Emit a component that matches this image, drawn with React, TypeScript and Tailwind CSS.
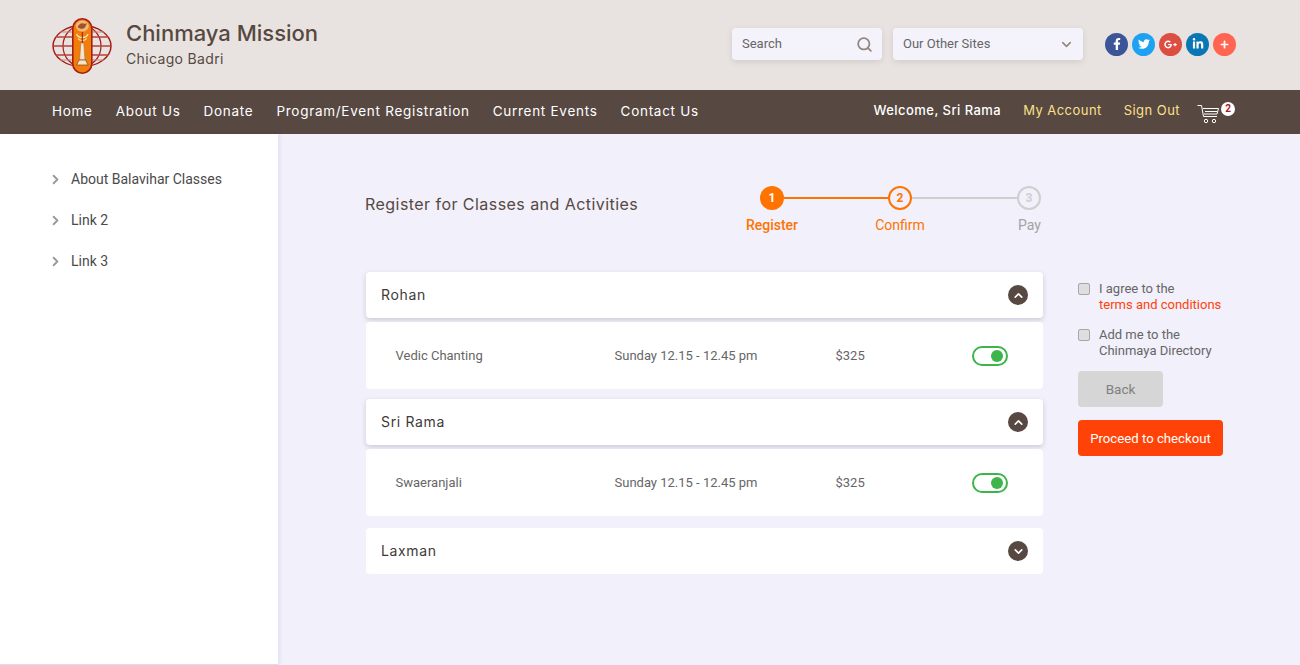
import React from 'react';
import { ChevronDown, ChevronRight, ChevronUp, Search } from 'lucide-react';
import { FaFacebookF, FaGooglePlusG, FaLinkedinIn, FaPlus, FaTwitter } from 'react-icons/fa';

const navLinks = ['Home', 'About Us', 'Donate', 'Program/Event Registration', 'Current Events', 'Contact Us'];

const Logo = () => (
  <svg width="60" height="56" viewBox="0 0 60 56" fill="none" className="mt-[2px] shrink-0">
    <ellipse cx="30" cy="28" rx="29" ry="20.5" stroke="#a81c14" strokeWidth="1.5" />
    <ellipse cx="30" cy="28" rx="19" ry="20.5" stroke="#a81c14" strokeWidth="1.2" />
    <path d="M4 19H56M1.5 28H58.5M4 37H56" stroke="#b8403a" strokeWidth="1.5" />
    <path d="M8 14H52M8 42H52" stroke="#c9807a" strokeWidth="1" />
    <rect x="20.8" y="0.8" width="19" height="54.4" rx="9.5" fill="#f07f09" stroke="#a81c14" strokeWidth="1.6" />
    {/* bird */}
    <ellipse cx="30.3" cy="8" rx="6.5" ry="5.5" fill="#f2b878" />
    <path d="M25.500 9c1.500-3 4-4.500 6-3.500 1.500 0.500 3 0 3.500-0.500-0.500 2-1.500 3-2 4.500-2 2-5.500 1.500-7.500-0.500z" fill="#a0522d" />
    {/* lamp tiers */}
    <path d="M24.500 16c1 2.500 3 3.500 5.800 3.500s4.800-1 5.800-3.500" stroke="#fbe3c0" strokeWidth="1.300" />
    <path d="M26 20.500c1 1.500 2.500 2 4.300 2s3.300-0.500 4.300-2" stroke="#fbe3c0" strokeWidth="1.200" />
    <path d="M30.300 14v11" stroke="#a81c14" strokeWidth="1.100" />
    <path d="M28.800 25h3l1.200 17h-5.400z" fill="#f6e3cc" stroke="#b06a40" strokeWidth="0.600" />
    <path d="M24.500 47h11.600l-2.500-5h-6.600z" fill="#f6e3cc" stroke="#8a3a20" strokeWidth="0.700" />
  </svg>
);

const CartIcon = () => (
  <svg width="23" height="23" viewBox="0 0 23 23" fill="none" stroke="#fff" strokeWidth="1">
    <path d="M0.500 3.500H4.500L6.500 14.500H20" />
    <path d="M6 6.500H21.500L20 12H7M8 9.500H20" />
    <circle cx="9" cy="19" r="1.700" />
    <circle cx="17" cy="19" r="1.700" />
  </svg>
);

const Step = ({ n, label, state }: { n: number; label: string; state: 'done' | 'current' | 'todo' }) => (
  <div className="relative flex h-6 w-6 shrink-0 items-center justify-center">
    <div
      className={
        state === 'done'
          ? 'flex h-6 w-6 items-center justify-center rounded-full bg-[#ff7300] text-xs font-bold text-white'
          : state === 'current'
            ? 'flex h-6 w-6 items-center justify-center rounded-full border-2 border-[#ff7300] text-xs font-bold text-[#ff7300]'
            : 'flex h-6 w-6 items-center justify-center rounded-full border-2 border-[#cfcfcf] text-xs font-bold text-[#cfcfcf]'
      }
    >
      {n}
    </div>
    <span
      className={
        state === 'todo'
          ? 'absolute top-[29px] right-0 text-sm text-[#a3a3a3]'
          : state === 'done'
            ? 'absolute top-[29px] left-1/2 -translate-x-1/2 text-sm font-medium text-[#ff7300]'
            : 'absolute top-[29px] left-1/2 -translate-x-1/2 text-sm text-[#ff7300]'
      }
    >
      {label}
    </span>
  </div>
);

const Toggle = () => (
  <div className="flex h-5 w-9 items-center justify-end rounded-full border-2 border-[#3db54a] pr-[3px]">
    <div className="h-3 w-3 rounded-full bg-[#3db54a]" />
  </div>
);

const PersonHeader = ({ name, open }: { name: string; open: boolean }) => (
  <div
    className={`flex h-[46px] items-center justify-between rounded-sm bg-white px-[15px] ${
      open ? 'shadow-[0_2px_5px_rgba(60,50,90,0.2)]' : ''
    }`}
  >
    <span className="mb-[1px] font-['Inter',sans-serif] text-[14px] tracking-[0.65px] text-[#3f3a38]">{name}</span>
    <div className="flex h-5 w-5 items-center justify-center rounded-full bg-[#574841] text-white">
      {open ? <ChevronUp size={13} strokeWidth={3} /> : <ChevronDown size={13} strokeWidth={3} />}
    </div>
  </div>
);

const ClassRow = ({ title }: { title: string }) => (
  <div className="mt-1 flex h-[67px] items-center rounded-sm bg-white text-[13px] text-[#666]">
    <span className="ml-[29.5px] w-[219px]">{title}</span>
    <span className="w-[221px]">Sunday 12.15 - 12.45 pm</span>
    <span className="w-[136.5px]">$325</span>
    <Toggle />
  </div>
);

const Social = ({ bg, children }: { bg: string; children: React.ReactNode }) => (
  <div className={`flex h-[23px] w-[23px] items-center justify-center rounded-full text-white ${bg}`}>{children}</div>
);

export default function App() {
  return (
    <div className="flex h-[665px] w-full flex-col overflow-hidden bg-[#f1f0fb] font-['Roboto',sans-serif]">
      {/* Header */}
      <header className="flex h-[90px] shrink-0 items-center bg-[#e8e3e0] pr-[64px] pl-[52px]">
        <Logo />
        <div className="mb-[4px] ml-[14px] font-['Inter',sans-serif] text-[#574841]">
          <div className="text-[22px] leading-[28px] font-medium">Chinmaya Mission</div>
          <div className="mt-[3px] text-[14px] leading-[18px] tracking-[0.35px]">Chicago Badri</div>
        </div>
        <div className="mb-[2px] ml-auto flex items-center">
          <div className="flex h-8 w-[150px] items-center justify-between rounded-sm bg-[#f4f3fb] pr-[9px] pl-[10px] text-[13px] text-[#666] shadow-[0_2px_6px_rgba(0,0,0,0.1)]">
            <span>Search</span>
            <Search size={17} strokeWidth={2.5} className="text-[#94867f]" />
          </div>
          <div className="ml-[11px] flex h-8 w-[190px] items-center justify-between rounded-sm bg-[#f4f3fb] pr-[9px] pl-[10px] text-[13px] text-[#666] shadow-[0_2px_6px_rgba(0,0,0,0.1)]">
            <span>Our Other Sites</span>
            <ChevronDown size={15} strokeWidth={2.5} className="text-[#94867f]" />
          </div>
          <div className="ml-[22px] flex items-center gap-[4px]">
            <Social bg="bg-[#3b5598]"><FaFacebookF size={12} /></Social>
            <Social bg="bg-[#1da1f2]"><FaTwitter size={12} /></Social>
            <Social bg="bg-[#dc4e41]"><FaGooglePlusG size={13} /></Social>
            <Social bg="bg-[#0a77b5]"><FaLinkedinIn size={12} /></Social>
            <Social bg="bg-[#ff6550]"><FaPlus size={9} /></Social>
          </div>
        </div>
      </header>

      {/* Nav */}
      <nav className="flex h-[44px] shrink-0 items-center justify-between bg-[#574841] pr-[65px] pl-[52px] font-['Inter',sans-serif] text-white">
        <div className="mb-[1px] flex items-center gap-[23px] text-[13.5px] tracking-[0.72px]">
          {navLinks.map((link) => (
            <span key={link}>{link}</span>
          ))}
        </div>
        <div className="flex items-center text-[13px] tracking-[0.45px]">
          <span className="mb-[2px] font-medium">Welcome, Sri Rama</span>
          <span className="mb-[2px] ml-[22px] text-[#fbe08a]">My Account</span>
          <span className="mb-[2px] ml-[22px] text-[#fbe08a]">Sign Out</span>
          <div className="relative top-[1px] ml-[17px] h-[23px] w-[38px]">
            <CartIcon />
            <span className="absolute top-0 right-0 flex h-[14px] w-[14px] items-center justify-center rounded-full bg-white font-['Roboto',sans-serif] text-[10px] font-bold tracking-normal text-[#a0222a]">
              2
            </span>
          </div>
        </div>
      </nav>

      <div className="flex min-h-0 flex-1">
        {/* Sidebar */}
        <aside className="w-[278px] shrink-0 border-b border-[#dddde4] bg-white pt-[35px] pl-[48px] text-sm text-[#4a4a4a] shadow-[2px_0_4px_rgba(60,50,90,0.08)]">
          {['About Balavihar Classes', 'Link 2', 'Link 3'].map((item) => (
            <div key={item} className="mb-[21px] flex h-5 items-center">
              <ChevronRight size={15} strokeWidth={3} className="text-[#9a9a9a]" />
              <span className="ml-[8px]">{item}</span>
            </div>
          ))}
        </aside>

        {/* Main */}
        <main className="flex-1 pt-[52px] pl-[87px]">
          <div className="flex h-[86px] w-[678px] items-start">
            <h1 className="mt-[7px] w-[395px] font-['Inter',sans-serif] text-[16px] leading-[22px] tracking-[0.45px] text-[#574841]">
              Register for Classes and Activities
            </h1>
            <div className="flex w-[281px] items-center">
              <Step n={1} label="Register" state="done" />
              <div className="h-[2px] w-[104px] bg-[#ff7300]" />
              <Step n={2} label="Confirm" state="current" />
              <div className="h-[2px] flex-1 bg-[#cfcfcf]" />
              <Step n={3} label="Pay" state="todo" />
            </div>
          </div>

          <div className="flex">
            <div className="ml-[1px] w-[677px]">
              <PersonHeader name="Rohan" open />
              <ClassRow title="Vedic Chanting" />
              <div className="mt-[10px]">
                <PersonHeader name="Sri Rama" open />
              </div>
              <ClassRow title="Swaeranjali" />
              <div className="mt-[12px]">
                <PersonHeader name="Laxman" open={false} />
              </div>
            </div>

            <div className="ml-[35px] text-[13px] leading-[16px] text-[#666]">
              <label className="mt-[9px] flex">
                <span className="mt-[2px] h-[12px] w-[12px] rounded-[2px] border border-[#a8a8a8] bg-[#dedee2]" />
                <span className="ml-[9px]">
                  I agree to the
                  <br />
                  <span className="text-[#ff4208]">terms and conditions</span>
                </span>
              </label>
              <label className="mt-[14px] flex">
                <span className="mt-[2px] h-[12px] w-[12px] rounded-[2px] border border-[#a8a8a8] bg-[#dedee2]" />
                <span className="ml-[9px]">
                  Add me to the
                  <br />
                  Chinmaya Directory
                </span>
              </label>
              <button className="mt-[12px] block h-9 w-[85px] rounded-sm bg-[#d6d6d6] text-[13.5px] text-[#808080]">Back</button>
              <button className="mt-[13px] block h-9 w-[145px] rounded-sm bg-[#ff4208] pt-[1px] text-[13.2px] text-white">Proceed to checkout</button>
            </div>
          </div>
        </main>
      </div>
    </div>
  );
}
